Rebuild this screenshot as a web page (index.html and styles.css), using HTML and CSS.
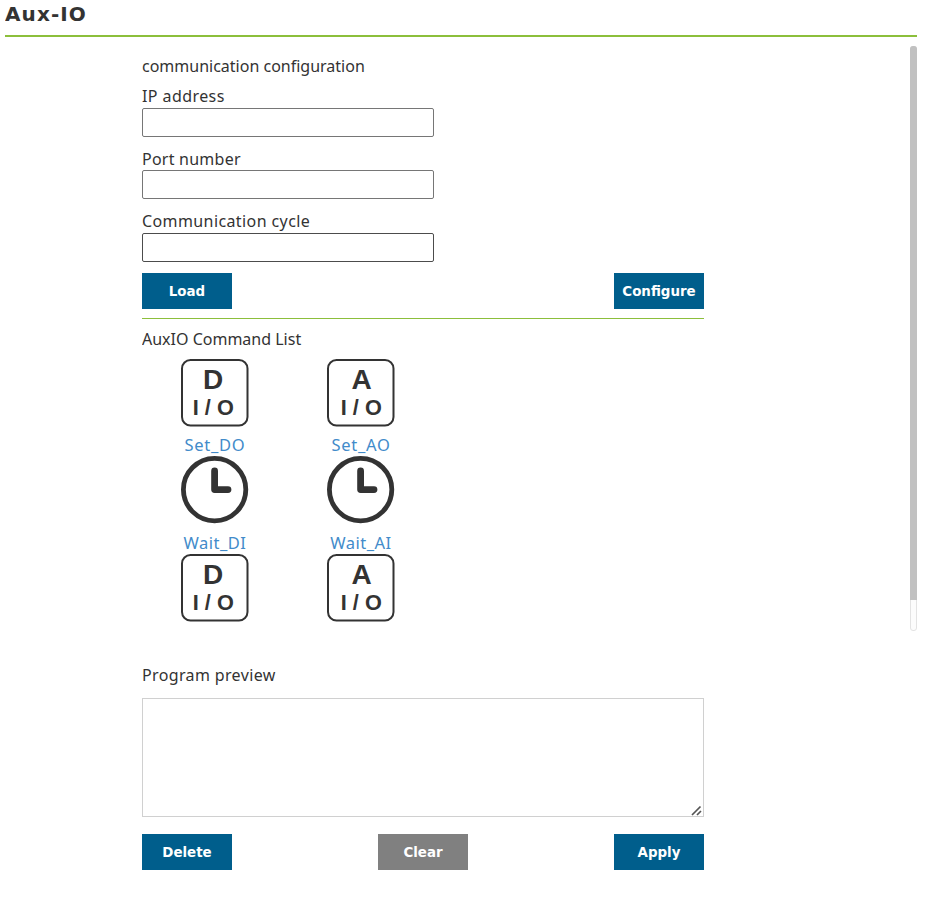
FILE: index.html
```html
<!DOCTYPE html>
<html lang="en">
<head>
<meta charset="utf-8">
<title>Aux-IO</title>
<link rel="stylesheet" href="styles.css">
</head>
<body>
<svg class="defs" width="0" height="0">
  <symbol id="frame" viewBox="0 0 68 68"><rect x="1" y="1" width="65.5" height="65.5" rx="8.5" fill="none" stroke="#333" stroke-width="2"/></symbol>
  <symbol id="clock" viewBox="0 0 68 68"><circle cx="33.6" cy="33.6" r="31.2" fill="none" stroke="#333" stroke-width="4.8"/><path d="M33.6 15v18.6h13.4" fill="none" stroke="#333" stroke-width="6.8" stroke-linecap="round" stroke-linejoin="round"/></symbol>
</svg>
<header class="title"><h1>Aux-IO</h1></header>
<main class="scroll">
  <div class="content">
    <h2 class="heading">communication configuration</h2>
    <form class="fields">
      <label class="field"><span class="ip">IP address</span><input type="text"></label>
      <label class="field middle"><span class="port">Port number</span><input type="text"></label>
      <label class="field"><span class="cycle">Communication cycle</span><input type="text" class="dark"></label>
    </form>
    <div class="buttons"><button>Load</button><button>Configure</button></div>
    <section class="commands">
      <h2 class="heading">AuxIO Command List</h2>
      <div class="grid">
        <a class="cmd"><svg width="68" height="68"><use href="#frame"/><text x="22" y="30" class="big">D</text><text x="11.8" y="56" class="small" textLength="41" lengthAdjust="spacingAndGlyphs">I / O</text></svg><span>Set_DO</span></a>
        <a class="cmd"><svg width="68" height="68"><use href="#frame"/><text x="24.5" y="30" class="big">A</text><text x="13.8" y="56.4" class="small" textLength="41" lengthAdjust="spacingAndGlyphs">I / O</text></svg><span>Set_AO</span></a>
        <a class="cmd wait"><svg width="68" height="68"><use href="#clock"/></svg><span>Wait_DI</span></a>
        <a class="cmd wait"><svg width="68" height="68"><use href="#clock"/></svg><span>Wait_AI</span></a>
        <a class="cmd"><svg width="68" height="68"><use href="#frame"/><text x="22" y="30" class="big">D</text><text x="11.8" y="56" class="small" textLength="41" lengthAdjust="spacingAndGlyphs">I / O</text></svg></a>
        <a class="cmd"><svg width="68" height="68"><use href="#frame"/><text x="24.5" y="30" class="big">A</text><text x="13.8" y="56.4" class="small" textLength="41" lengthAdjust="spacingAndGlyphs">I / O</text></svg></a>
      </div>
    </section>
  </div>
  <div class="track"><div class="thumb"></div></div>
</main>
<section class="preview">
  <h2 class="heading wide">Program preview</h2>
  <div class="editor">
    <textarea></textarea>
    <svg class="grip" width="11" height="11"><path d="M1 10L9.5 1.5M6 10L10 6" stroke="#555" stroke-width="1.7"/></svg>
  </div>
  <div class="buttons"><button>Delete</button><button class="gray">Clear</button><button>Apply</button></div>
</section>
</body>
</html>
```
FILE: styles.css
```css
* { box-sizing: border-box; }
body {
  margin: 0 10px 0 5px;
  background: #fff;
  color: #333;
  font: 16px/24px "Noto Sans", sans-serif;
}
h1, h2 { margin: 0; }
.defs { position: absolute; }
.title { height: 37px; border-bottom: 2px solid #8cbf3b; }
.title h1 { font: bold 20px/28px "DejaVu Sans", sans-serif; letter-spacing: 1.1px; }
.scroll { display: flex; justify-content: space-between; height: 594px; padding-top: 9px; }
.content { width: 562px; margin-left: 137px; padding-top: 8px; height: 585px; overflow: hidden; }
.heading { font-size: 16px; font-weight: 400; line-height: 24px; white-space: nowrap; }
.wide { letter-spacing: .36px; }
.fields { padding-top: 6px; }
.field { display: block; width: 292px; height: 62px; }
.field.middle { height: 63px; }
.field span { display: block; height: 24px; white-space: nowrap; }
.field .ip { letter-spacing: .42px; }
.field .port { letter-spacing: .24px; line-height: 26px; }
.field .cycle { letter-spacing: .4px; }
.field input {
  display: block;
  width: 292px;
  height: 29px;
  border: 1px solid #767676;
  border-radius: 2px;
  background: #fff;
}
.field .dark { border-color: #4c4c4c; }
.buttons { display: flex; justify-content: space-between; }
.fields + .buttons { padding-top: 2px; }
button {
  width: 90px;
  height: 36px;
  padding: 1px 0 0;
  border: 0;
  background: #005e8c;
  color: #fff;
  font: bold 13.4px/35px "DejaVu Sans", sans-serif;
}
button.gray { background: #808080; }
.commands { margin-top: 9px; border-top: 1px solid #8cbf3b; padding-top: 8px; }
.grid { display: grid; grid-template-columns: 146px 146px; grid-template-rows: 97px 98px 68px; padding-top: 8px; }
.cmd { display: flex; flex-direction: column; align-items: center; color: #428bca; }
.cmd svg { display: block; flex-shrink: 0; }
.cmd span { margin-top: 6px; font-size: 16.5px; letter-spacing: .7px; }
.cmd.wait span { margin-top: 7px; letter-spacing: .5px; }
.cmd text { fill: #333; font-family: "Liberation Sans", sans-serif; font-weight: 700; }
.cmd .big { font-size: 28px; }
.cmd .small { font-size: 22.5px; }
.track { width: 7px; height: 585px; border: 1px solid #e3e3e3; border-radius: 3px; background: #fcfcfc; }
.thumb { width: 7px; height: 554px; margin: -1px; border-radius: 3px 3px 0 0; background: #c1c1c1; }
.preview { width: 562px; margin-left: 137px; padding-top: 32px; }
.editor { position: relative; margin: 11px 0 17px; }
textarea {
  display: block;
  width: 562px;
  height: 119px;
  border: 1px solid #d0d0d0;
  background: #fff;
  resize: none;
}
.grip { position: absolute; right: 2px; bottom: 1px; }
```
